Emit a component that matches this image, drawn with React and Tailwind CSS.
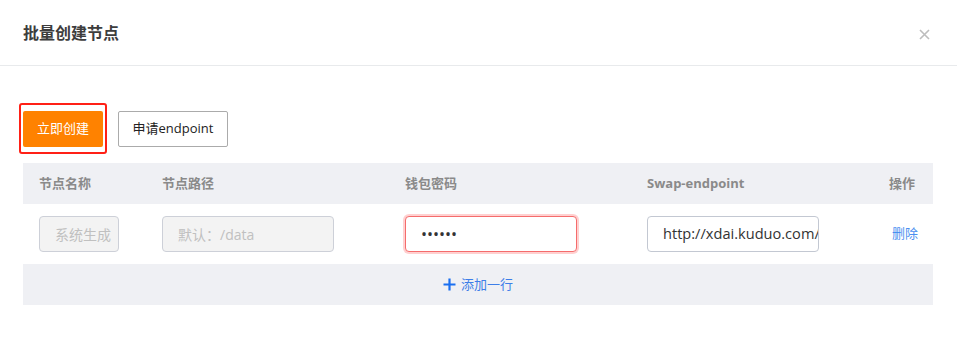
export default function App() {
  const font = { fontFamily: '"Open Sans", "Noto Sans CJK SC", sans-serif' };
  return (
    <div className="w-[957px] h-[364px] bg-white overflow-hidden" style={font}>
      <div className="h-[66px] border-b border-[#e8eaec] flex items-center justify-between pl-[23px] pr-[27px]">
        <div className="text-[16px] font-bold text-[#3d3d3d] pt-[1px]">批量创建节点</div>
        <svg width="11" height="11" viewBox="0 0 11 11" className="mt-[3px]">
          <path d="M1 1L10 10M10 1L1 10" stroke="#bdbdbd" strokeWidth="1.6" />
        </svg>
      </div>
      <div className="pl-[19px] pt-[37px] flex items-center">
        <div className="border-2 border-[#ff2016] rounded-[3px] px-[2px] pt-[6px] pb-[5px]">
          <button className="w-[80px] h-[36px] bg-[#ff8200] rounded-[2px] text-white text-[13px] flex items-center justify-center">
            立即创建
          </button>
        </div>
        <button className="ml-[11px] w-[110px] h-[36px] border border-[#ababab] rounded-[2px] bg-white text-[13px] text-[#222] flex items-center justify-center">
          申请endpoint
        </button>
      </div>
      <div className="ml-[23px] mt-[9px] w-[910px]">
        <div className="grid grid-cols-[123px_243px_242px_242px_60px] h-[41px] bg-[#eff0f4] items-center text-[13px] font-bold text-[#8a8a8a]">
          <div className="pl-[16px]">节点名称</div>
          <div className="pl-[16px]">节点路径</div>
          <div className="pl-[16px]">钱包密码</div>
          <div className="pl-[16px]">Swap-endpoint</div>
          <div className="pl-[16px]">操作</div>
        </div>
        <div className="grid grid-cols-[123px_243px_242px_242px_60px] h-[60px] items-center text-[14px]">
          <div className="pl-[16px]">
            <div className="w-[80px] h-[36px] border border-[#cdd0d8] rounded-[4px] bg-[#f3f3f3] text-[#c0c0c0] pl-[15px] flex items-center overflow-hidden whitespace-nowrap">
              系统生成
            </div>
          </div>
          <div className="pl-[16px]">
            <div className="w-[172px] h-[36px] border border-[#cdd0d8] rounded-[4px] bg-[#f3f3f3] text-[#c0c0c0] pl-[15px] flex items-center">
              默认：/data
            </div>
          </div>
          <div className="pl-[16px]">
            <div className="w-[172px] h-[36px] border border-[#f56c6c] rounded-[4px] bg-white shadow-[0_0_0_2px_rgba(255,120,120,0.35)] pl-[15px] flex items-center text-[#333] text-[16px] tracking-[0px]">
              ••••••
            </div>
          </div>
          <div className="pl-[16px]">
            <div className="w-[172px] h-[36px] border border-[#c3c8d2] rounded-[4px] bg-white pl-[15px] flex items-center text-[#333] text-[14.6px] overflow-hidden whitespace-nowrap">
              http://xdai.kuduo.com/
            </div>
          </div>
          <div className="pl-[19px] text-[13px] text-[#4a8ff0]">删除</div>
        </div>
        <div className="h-[41px] bg-[#eff0f4] flex items-center justify-center text-[13px] text-[#3d7ee8]">
          <svg width="13" height="13" viewBox="0 0 13 13" className="mr-[5px]">
            <path d="M6.5 0.5V12.5M0.5 6.5H12.5" stroke="#1a6ff0" strokeWidth="2.2" />
          </svg>
          添加一行
        </div>
      </div>
    </div>
  );
}
